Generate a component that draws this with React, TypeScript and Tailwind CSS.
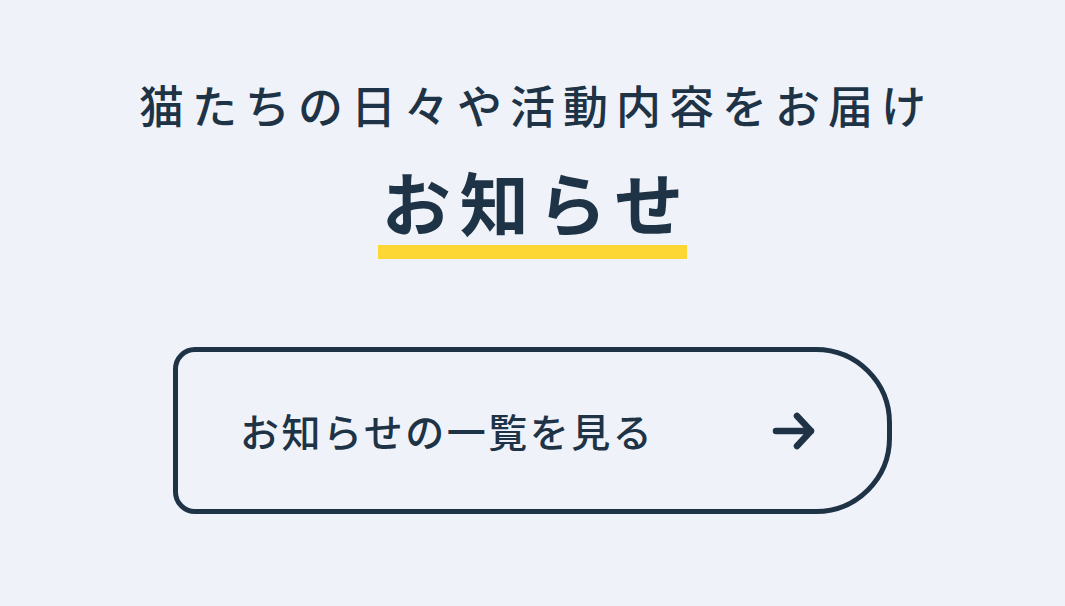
import React from "react";

const font = '"Noto Sans CJK JP", "Noto Sans", sans-serif';

function ArrowRight() {
  return (
    <svg width="46" height="40" viewBox="0 0 46 40" fill="none">
      <path
        d="M5 20H40M26 5L40 20L26 35"
        stroke="#1f3347"
        strokeWidth="6.5"
        strokeLinecap="round"
        strokeLinejoin="round"
      />
    </svg>
  );
}

export default function App() {
  return (
    <div
      className="min-h-screen w-full bg-[#eff3f9] flex flex-col items-center text-[#1f3347]"
      style={{ fontFamily: font }}
    >
      <p className="mt-[82px] text-[45px] leading-none font-medium tracking-[8px] pl-[8px]">
        猫たちの日々や活動内容をお届け
      </p>
      <h2 className="mt-[40px] flex flex-col items-center">
        <span className="text-[69px] leading-none font-bold tracking-[9px] pl-[9px]">
          お知らせ
        </span>
        <span className="mt-[9px] block h-[14px] w-[309px] bg-[#fdd835]" />
      </h2>
      <a
        href="#"
        className="mt-[88px] flex h-[167px] w-[719px] items-center justify-between rounded-l-[22px] rounded-r-[76px] border-[5px] border-[#1f3347] pl-[62px] pr-[70px]"
      >
        <span className="text-[39px] leading-none font-medium tracking-[2.5px]">
          お知らせの一覧を見る
        </span>
        <ArrowRight />
      </a>
    </div>
  );
}
